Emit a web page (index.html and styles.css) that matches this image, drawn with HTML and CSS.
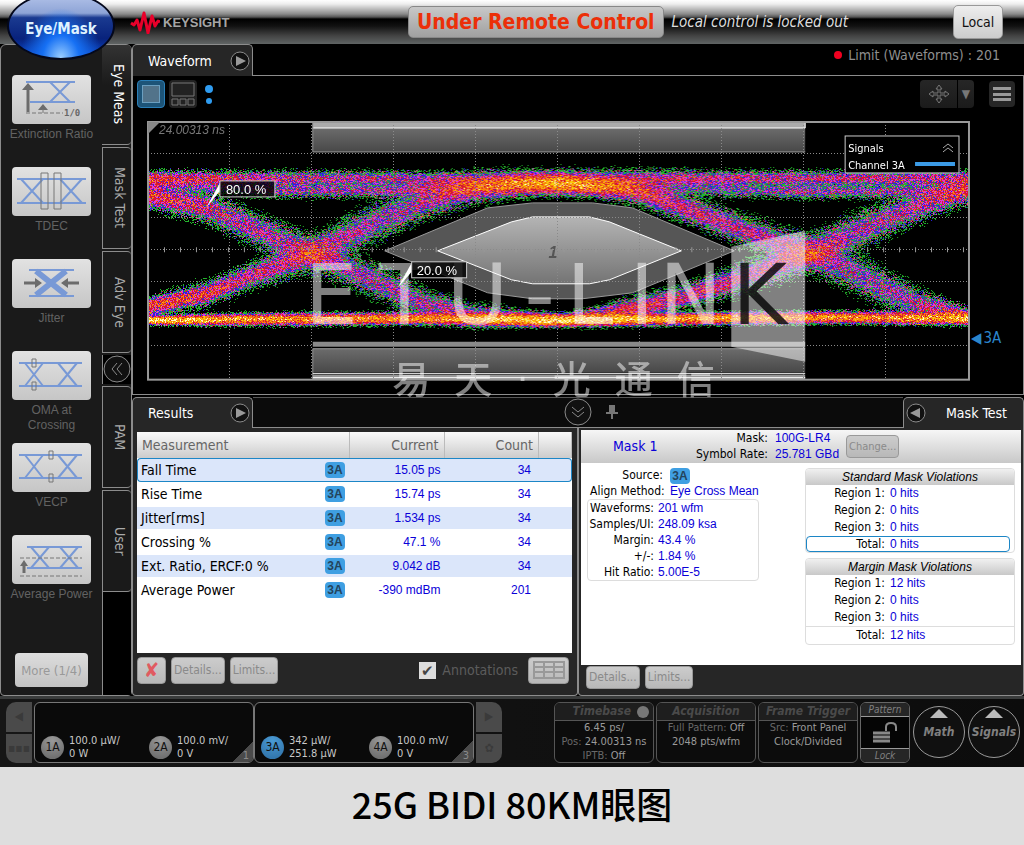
FILE: index.html
```html
<!DOCTYPE html>
<html lang="en">

<head>
  <meta charset="UTF-8">
  <meta name="viewport" content="width=device-width, initial-scale=1.0">
  <title>25G BIDI 80KM眼图</title>

  <link rel="stylesheet" href="styles.css">
</head>

<body>
  <div class="instrument">

    <header class="topbar">
      <button class="mode">Eye/Mask</button>
      <div class="brand">
        <svg width="30" height="24" viewBox="0 0 30 24">
          <path d="M1 13l3 2 3-5 3 10 4-17 4 20 4-17 3 10 3-5 2 1" fill="none" stroke="#e9002a" stroke-width="3" stroke-linejoin="round"/>
        </svg>
        <span>KEYSIGHT</span>
      </div>
      <p class="remote"><strong>Under Remote Control</strong><em>Local control is locked out</em></p>
      <button class="local">Local</button>
    </header>

    <main>
      <aside class="sidebar">
        <section class="measures">
          <div class="measure">
            <button aria-labelledby="m1">
              <svg viewBox="0 0 79 49">
                <path class="eye" d="M14 7h49M18 27h45M38 7l20 20M58 7l-20 20"/>
                <path class="arm" d="M16 37V13"/>
                <path class="tip" d="M16 8l6 7H10zM31 29l5 6H26z"/>
                <path class="dash" d="M14 38h37M31 34v4"/>
                <text x="52" y="41">1/0</text>
              </svg>
            </button>
            <span id="m1">Extinction Ratio</span>
          </div>
          <div class="measure">
            <button aria-labelledby="m2">
              <svg viewBox="0 0 79 49">
                <path class="eye" d="M5 12h69M5 36h69M9 12l22 24M31 12L9 36M48 12l22 24M70 12L48 36"/>
                <path class="gate" d="M29 6h7v36h-7zM42 6h7v36h-7z"/>
              </svg>
            </button>
            <span id="m2">TDEC</span>
          </div>
          <div class="measure">
            <button aria-labelledby="m3">
              <svg viewBox="0 0 79 49">
                <path class="eye" d="M17 11h45M17 37h45"/>
                <path class="eye thick" d="M24 12l30 24M54 12L24 36"/>
                <path class="arm" d="M12 24h12M67 24H55"/>
                <path class="tip" d="M30 24l-7 5V19zM49 24l7 5V19z"/>
              </svg>
            </button>
            <span id="m3">Jitter</span>
          </div>
          <div class="measure">
            <button aria-labelledby="m4">
              <svg viewBox="0 0 79 49">
                <path class="eye" d="M7 12h63M7 35h63M13 12l18 23M31 12L13 35M46 12l19 23M65 12L46 35"/>
                <path class="gate" d="M20 8h4v8h-4zM20 31h4v8h-4z"/>
              </svg>
            </button>
            <span id="m4">OMA at<br>Crossing</span>
          </div>
          <div class="measure">
            <button aria-labelledby="m5">
              <svg viewBox="0 0 79 49">
                <path class="eye" d="M7 12h63M7 35h63M13 12l18 23M31 12L13 35M46 12l19 23M65 12L46 35"/>
                <path class="gate" d="M37 8h4v8h-4zM37 31h4v8h-4z"/>
              </svg>
            </button>
            <span id="m5">VECP</span>
          </div>
          <div class="measure">
            <button aria-labelledby="m6">
              <svg viewBox="0 0 79 49">
                <path class="eye" d="M15 12h55M15 33h55M19 12l18 21M37 12L19 33M48 12l18 21M66 12L48 33"/>
                <path class="dash" d="M8 23h62M8 41h62"/>
                <path class="arm" d="M12 38V29"/>
                <path class="tip" d="M12 25l4 6H8z"/>
              </svg>
            </button>
            <span id="m6">Average Power</span>
          </div>
          <button class="more">More (1/4)</button>
        </section>

        <nav class="sidetabs">
          <button class="selected">Eye Meas</button>
          <button>Mask Test</button>
          <button>Adv Eye</button>
          <button class="fold" aria-label="Collapse">
            <svg width="28" height="28" viewBox="0 0 28 28">
              <circle class="ring" cx="14" cy="14" r="13"/>
              <path class="chevron" d="M14 8l-5 6 5 6M19 8l-5 6 5 6"/>
            </svg>
          </button>
          <button>PAM</button>
          <button>User</button>
          <span class="rest"></span>
        </nav>
      </aside>

      <div class="workspace">
        <div class="tabrow">
          <div class="tab">
            <span>Waveform</span>
            <svg width="20" height="20" viewBox="0 0 20 20"><circle class="ring" cx="10" cy="10" r="9"/><path d="M6 5l10 5-10 5z" fill="#999"/></svg>
          </div>
          <p class="limit"><i></i>Limit (Waveforms) : 201</p>
        </div>

        <section class="waveform">
          <div class="tools">
            <button class="view selected" aria-label="Single view"><i></i></button>
            <button class="view" aria-label="Tiled view">
              <svg width="28" height="28" viewBox="0 0 28 28"><path d="M3 3h22v13H3zM3 19h6v6H3zM11 19h6v6h-6zM19 19h6v6h-6z" fill="none" stroke="#777"/></svg>
            </button>
            <svg class="dots" width="12" height="24" viewBox="0 0 12 24"><circle cx="6" cy="7" r="4"/><circle cx="6" cy="19" r="3"/></svg>
            <div class="move">
              <button aria-label="Pan">
                <svg width="24" height="24" viewBox="0 0 24 24"><path d="M12 3l3 4h-2v4h5V9l4 3-4 3v-2h-5v4h2l-3 4-3-4h2v-4H6v2l-4-3 4-3v2h5V7H9z" fill="none" stroke="#777"/></svg>
              </button>
              <button aria-label="Pan options">▼</button>
            </div>
            <button class="menu" aria-label="Menu"><i></i><i></i><i></i></button>
          </div>

          <div class="plotrow">
            <div class="plot">
              <canvas width="824" height="260"></canvas>
              <svg class="overlay" viewBox="0 0 824 260">
                <defs>
                  <linearGradient id="shade" x2="0" y2="1"><stop offset="0" stop-color="#b4b4b4"/><stop offset="1" stop-color="#747474"/></linearGradient>
                  <linearGradient id="slab" x2="0" y2="1"><stop offset="0" stop-color="#6c6c6c"/><stop offset="1" stop-color="#484848"/></linearGradient>
                </defs>

                <!-- mask regions -->
                <path d="M166 1h493v6H166z" fill="#aaa"/>
                <path d="M166 7h493v24H166z" fill="url(#slab)"/>
                <path d="M166 31h493" stroke="#999"/>
                <path d="M166 7h493M659 1v6" stroke="#fff"/>
                <path d="M166 221h493v5H166z" fill="#8a8a8a"/>
                <path d="M166 228h493v24H166z" fill="url(#slab)"/>
                <path d="M166 228h493M166 1v30M166 228v31" stroke="#999"/>
                <path d="M166 254h493v5H166z" fill="#999"/>
                <path d="M166 253h493M166 257h493" stroke="#fff"/>
                <path d="M238 130l103-43 45-5h60l40 5 102 43-102 42-50 6h-50l-45-6z" fill="#565656" stroke="#999"/>
                <path d="M291 130l74-29 21-5h57l20 5 72 29-72 29-20 4h-57l-21-4z" fill="url(#shade)" stroke="#fff"/>
                <text x="402" y="137" class="region">1</text>

                <!-- graticule -->
                <g class="grid">
                  <path d="M83 1v258M165 1v258M247 1v258M329 1v258M411 1v258M493 1v258M575 1v258M657 1v258M739 1v258"/>
                  <path d="M1 33h822M1 97h822M1 161h822M1 225h822M1 129h822"/>
                </g>
                <path class="ticks" d="M1 129h822"/>
                <rect x="1" y="1" width="822" height="258" fill="none" stroke="#999" stroke-width="2"/>
                <path d="M1 1h12L1 13z" fill="#888"/>
                <text x="12" y="13" class="time">24.00313 ns</text>

                <!-- watermark -->
                <path d="M585 126l74-16v131l-74-15z" fill="#fff" opacity=".5"/>
                <text class="logo" y="203"><tspan x="158">E</tspan><tspan x="232">T</tspan><tspan x="300">U</tspan><tspan x="378">-</tspan><tspan x="420">L</tspan><tspan x="483">I</tspan><tspan x="513">N</tspan><tspan class="cut" x="586">K</tspan></text>

                <!-- level callouts -->
                <path d="M73 62l-14 25 14-17z" fill="#fff"/>
                <rect class="callout" x="73" y="60" width="55" height="16"/>
                <text class="level" x="79" y="73">80.0 %</text>
                <path d="M265 142l-14 25 14-16z" fill="#fff"/>
                <rect class="callout" x="265" y="141" width="55" height="16"/>
                <text class="level" x="270" y="154">20.0 %</text>

                <rect class="signals" x="699" y="15" width="114" height="37"/>
                <text class="legend" x="702" y="31">Signals</text>
                <text class="legend" x="702" y="48">Channel 3A</text>
                <path d="M797 27l5-4 5 4M797 31l5-4 5 4" fill="none" stroke="#aaa"/>
                <path d="M769 43h40" stroke="#3b9be6" stroke-width="4"/>
              </svg>
              <p class="watermark"><span>易</span> <span>天</span> <span class="dot">·</span> <span>光</span> <span>通</span> <span>信</span></p>
            </div>
            <p class="marker">◀<span>3A</span></p>
          </div>
        </section>

        <div class="tabrow lower">
          <div class="tab">
            <span>Results</span>
            <svg width="20" height="20" viewBox="0 0 20 20"><circle class="ring" cx="10" cy="10" r="9"/><path d="M6 5l10 5-10 5z" fill="#999"/></svg>
          </div>
          <div class="between">
            <button class="fold" aria-label="Hide panels">
              <svg width="28" height="28" viewBox="0 0 28 28"><circle class="ring" cx="14" cy="14" r="13"/><path class="chevron" d="M8 9l6 5 6-5M8 14l6 5 6-5"/></svg>
            </button>
            <svg width="14" height="16" viewBox="0 0 14 16"><path d="M4 1h6v7h3v2H8v5H6v-5H1V8h3z" fill="#777"/></svg>
          </div>
          <div class="tab right">
            <svg width="20" height="20" viewBox="0 0 20 20"><circle class="ring" cx="10" cy="10" r="9"/><path d="M14 5L4 10l10 5z" fill="#999"/></svg>
            <span>Mask Test</span>
          </div>
        </div>

        <div class="panels">
          <section class="results">
            <div class="sheet">
              <table>
                <thead>
                  <tr><th>Measurement</th><th></th><th>Current</th><th>Count</th><th></th></tr>
                </thead>
                <tbody>
                  <tr class="selected"><td>Fall Time</td><td><b class="chip">3A</b></td><td>15.05 ps</td><td>34</td><td></td></tr>
                  <tr><td>Rise Time</td><td><b class="chip">3A</b></td><td>15.74 ps</td><td>34</td><td></td></tr>
                  <tr><td>Jitter[rms]</td><td><b class="chip">3A</b></td><td>1.534 ps</td><td>34</td><td></td></tr>
                  <tr><td>Crossing %</td><td><b class="chip">3A</b></td><td>47.1 %</td><td>34</td><td></td></tr>
                  <tr><td>Ext. Ratio, ERCF:0 %</td><td><b class="chip">3A</b></td><td>9.042 dB</td><td>34</td><td></td></tr>
                  <tr><td>Average Power</td><td><b class="chip">3A</b></td><td>-390 mdBm</td><td>201</td><td></td></tr>
                </tbody>
              </table>
            </div>
            <div class="actions">
              <button class="flat clear" aria-label="Clear">✘</button>
              <button class="flat">Details...</button>
              <button class="flat">Limits...</button>
              <label class="annot"><input type="checkbox" checked>Annotations</label>
              <button class="flat cells" aria-label="Table layout">
                <svg width="32" height="18" viewBox="0 0 32 18"><path d="M1 1h30v16H1zM1 6h30M1 11h30M11 1v16M21 1v16" fill="none" stroke="#999" stroke-width="2"/></svg>
              </button>
            </div>
          </section>

          <section class="masktest">
            <div class="sheet">
              <div class="maskhead">
                <h2>Mask 1</h2>
                <dl>
                  <dt>Mask:</dt><dd>100G-LR4</dd>
                  <dt>Symbol Rate:</dt><dd>25.781 GBd</dd>
                </dl>
                <button class="flat change">Change...</button>
              </div>
              <div class="maskbody">
                <div class="setup">
                  <dl>
                    <dt>Source:</dt><dd><b class="chip">3A</b></dd>
                    <dt>Align Method:</dt><dd>Eye Cross Mean</dd>
                  </dl>
                  <dl class="boxed">
                    <dt>Waveforms:</dt><dd>201 wfm</dd>
                    <dt>Samples/UI:</dt><dd>248.09 ksa</dd>
                    <dt>Margin:</dt><dd>43.4 %</dd>
                    <dt>+/-:</dt><dd>1.84 %</dd>
                    <dt>Hit Ratio:</dt><dd>5.00E-5</dd>
                  </dl>
                </div>
                <div class="violations">
                  <section>
                    <h3>Standard Mask Violations</h3>
                    <dl>
                      <dt>Region 1:</dt><dd>0 hits</dd>
                      <dt>Region 2:</dt><dd>0 hits</dd>
                      <dt>Region 3:</dt><dd>0 hits</dd>
                    </dl>
                    <dl class="total selected"><dt>Total:</dt><dd>0 hits</dd></dl>
                  </section>
                  <section>
                    <h3>Margin Mask Violations</h3>
                    <dl>
                      <dt>Region 1:</dt><dd>12 hits</dd>
                      <dt>Region 2:</dt><dd>0 hits</dd>
                      <dt>Region 3:</dt><dd>0 hits</dd>
                    </dl>
                    <dl class="total"><dt>Total:</dt><dd>12 hits</dd></dl>
                  </section>
                </div>
              </div>
            </div>
            <div class="actions">
              <button class="flat">Details...</button>
              <button class="flat">Limits...</button>
            </div>
          </section>
        </div>
      </div>
    </main>

    <footer class="status">
      <div class="paddle left"><button aria-label="Previous">◀</button><button aria-label="Grid">▪▪▪</button></div>
      <div class="slot">
        <div class="channel"><b>1A</b><span>100.0 µW/<br>0 W</span></div>
        <div class="channel"><b>2A</b><span>100.0 mV/<br>0 V</span></div>
        <span class="corner">1</span>
      </div>
      <div class="slot">
        <div class="channel active"><b>3A</b><span>342 µW/<br>251.8 µW</span></div>
        <div class="channel"><b>4A</b><span>100.0 mV/<br>0 V</span></div>
        <span class="corner">3</span>
      </div>
      <div class="paddle"><button aria-label="Next">▶</button><button aria-label="Settings">✿</button></div>

      <div class="card first">
        <h4>Timebase <i></i></h4>
        <p><span>6.45 ps/</span><br>Pos: <span>24.00313 ns</span><br>IPTB: <span>Off</span></p>
      </div>
      <div class="card">
        <h4>Acquisition</h4>
        <p>Full Pattern: <span>Off</span><br><span>2048 pts/wfm</span></p>
      </div>
      <div class="card">
        <h4>Frame Trigger</h4>
        <p>Src: <span>Front Panel</span><br><span>Clock/Divided</span></p>
      </div>
      <button class="lock">
        <span>Pattern</span>
        <svg width="28" height="24" viewBox="0 0 28 24"><path d="M2 12h17M2 16h17M2 20h17" stroke="#888" stroke-width="3"/><path d="M15 10V6q0-4 5-4t5 4v4" fill="none" stroke="#888" stroke-width="2"/></svg>
        <span>Lock</span>
      </button>
      <button class="round"><i></i>Math</button>
      <button class="round"><i></i>Signals</button>
    </footer>
  </div>

  <p class="caption">25G BIDI 80KM眼图</p>

  <script src="trace.js"></script>
</body>

</html>
```
FILE: styles.css
```css
:root {
  --ui: "DejaVu Sans Condensed", "DejaVu Sans", sans-serif;
  --num: "Liberation Sans", Arial, sans-serif;
  --line: #8c8c8c;
  --panel: #262626;
  --value: #0a00d8;
}

* {
  box-sizing: border-box;
}

body {
  margin: 0;
  background: #dedede;
  font-family: var(--ui);
  font-size: 14px;
}

p,
dl,
dd,
h2,
h3,
h4 {
  margin: 0;
}

button {
  padding: 0;
  border: 0;
  background: none;
  color: inherit;
  font: inherit;
}

svg {
  display: block;
}

.instrument {
  background: #000;
}

.ring {
  fill: #111;
  stroke: #8a8a8a;
}

.chevron {
  fill: none;
  stroke: #8a8a8a;
}

/* top bar */
.topbar {
  position: relative;
  display: flex;
  align-items: center;
  height: 44px;
  padding: 0 21px 0 130px;
  background: linear-gradient(#fff 0, #eee 4px, #8a8a8a 14px, #555 17px, #000 19px, #111 26px, #444 36px, #606464 44px);
}

.mode {
  position: absolute;
  z-index: 2;
  left: 7px;
  top: -8px;
  width: 108px;
  height: 68px;
  padding-top: 6px;
  border: 2px solid #04081c;
  border-radius: 50%;
  background:
    radial-gradient(ellipse at 50% 100%, #9ccfff 0, #1670f4 25%, transparent 55%),
    linear-gradient(#b4c4ea 0, #8ea4d6 30%, #1a3a90 37%, #08227c 70%, #0c50d8 100%);
  color: #dff2ff;
  font-size: 15px;
  font-weight: bold;
}

.brand {
  display: flex;
  align-items: center;
  gap: 3px;
  color: #a5a5a5;
  font: bold 13px var(--num);
}

.remote {
  display: flex;
  align-items: center;
  gap: 8px;
  margin-left: auto;
  padding-right: 105px;
  color: #ddd;
  font-size: 15px;
}

.remote strong {
  padding: 0 8px;
  border: 1px solid #888;
  border-radius: 5px;
  background: linear-gradient(#c8c8c8, #a0a0a0);
  color: #ec2f08;
  font-size: 21px;
  line-height: 30px;
}

.local {
  width: 50px;
  height: 34px;
  border: 1px solid #999;
  border-radius: 5px;
  background: linear-gradient(#eee, #ccc);
  color: #111;
}

main {
  display: flex;
}

/* sidebar */
.sidebar {
  display: flex;
  flex: none;
  width: 132px;
  border: 1px solid var(--line);
  border-radius: 6px 6px 4px 4px;
  background: #1a1a1a;
}

.measures {
  display: flex;
  flex-direction: column;
  align-items: center;
  width: 101px;
  padding: 30px 0 8px;
}

.measure {
  display: flex;
  flex-direction: column;
  align-items: center;
  gap: 3px;
  height: 92px;
  color: #626262;
  font: 12px/15px var(--num);
  text-align: center;
  white-space: nowrap;
}

.measure button {
  width: 79px;
  height: 49px;
  border-radius: 4px;
  background: linear-gradient(#e2e2e2, #c6c6c6);
}

.measure text {
  fill: #666;
  font: bold 9px "DejaVu Sans Mono", monospace;
}

.eye {
  fill: none;
  stroke: #7899d6;
  stroke-width: 2;
}

.eye.thick {
  stroke-width: 6;
}

.arm {
  stroke: #6c6c6c;
  stroke-width: 3;
}

.tip {
  fill: #6c6c6c;
}

.gate {
  fill: none;
  stroke: #777;
}

.dash {
  fill: none;
  stroke: #777;
  stroke-dasharray: 4 2;
}

.more {
  width: 73px;
  height: 34px;
  margin-top: 26px;
  border-radius: 4px;
  background: linear-gradient(#ddd, #c2c2c2);
  color: #999;
  font-size: 13px;
}

.sidetabs {
  display: flex;
  flex: 1;
  flex-direction: column;
  gap: 2px;
}

.sidetabs button {
  height: 102px;
  padding-left: 5px;
  border: 1px solid var(--line);
  border-radius: 0 4px 4px 0;
  border-right: 0;
  color: #aaa;
  writing-mode: vertical-rl;
}

.sidetabs .selected {
  height: 100px;
  border-width: 0 0 1px;
  color: #fff;
  background: linear-gradient(#333, #1a1a1a 40px);
}

.sidetabs .fold {
  height: 29px;
  padding: 0;
  border-width: 0 0 0 1px;
  border-radius: 0;
  background: #000;
}

.sidetabs .rest {
  flex: 1;
  margin-top: -2px;
  border-left: 1px solid var(--line);
  background: #000;
}

/* workspace */
.workspace {
  flex: 1;
  min-width: 0;
}

.tabrow {
  display: flex;
  height: 32px;
}

.tab {
  display: flex;
  align-items: center;
  justify-content: space-between;
  width: 121px;
  padding: 0 2px 0 15px;
  border: 1px solid var(--line);
  border-bottom: 0;
  border-radius: 5px 5px 0 0;
  background: var(--panel);
  color: #fff;
}

.tab.right {
  padding: 0 16px 0 2px;
}

.limit {
  display: flex;
  flex: 1;
  align-items: center;
  justify-content: flex-end;
  gap: 6px;
  padding: 0 24px 9px 0;
  border-bottom: 1px solid var(--line);
  color: #8f8f8f;
}

.limit i {
  width: 8px;
  height: 8px;
  border-radius: 50%;
  background: #f00020;
}

.waveform {
  padding: 4px 3px 13px 4px;
  border: 1px solid var(--line);
  border-top: 0;
}

.tools {
  display: flex;
  align-items: center;
  gap: 4px;
  height: 28px;
}

.view {
  width: 28px;
  height: 28px;
  padding: 4px;
  border-radius: 4px;
  background: #222;
}

.view svg {
  margin: -4px;
}

.view.selected {
  border: 1px solid #2a7fb8;
  background: #1d5478;
}

.view i {
  display: block;
  height: 18px;
  border: 1px solid #6b9fc0;
  background: #52738a;
}

.dots {
  margin-left: 2px;
  fill: #2f9cf0;
}

.move {
  display: flex;
  gap: 1px;
  margin-left: auto;
}

.move button {
  display: flex;
  align-items: center;
  justify-content: center;
  width: 37px;
  height: 28px;
  border-radius: 4px 0 0 4px;
  background: linear-gradient(#262626, #1b1b1b);
  color: #777;
  font-size: 12px;
}

.move button + button {
  width: 16px;
  border-radius: 0 4px 4px 0;
}

.menu {
  display: flex;
  flex-direction: column;
  justify-content: space-between;
  width: 26px;
  height: 26px;
  margin: 0 5px 0 11px;
  padding: 6px 4px;
  border-radius: 4px;
  background: #262626;
}

.menu i {
  height: 3px;
  background: #999;
}

.plotrow {
  display: flex;
  padding: 13px 0 0 10px;
}

.plot {
  position: relative;
  flex: 1;
}

.plot canvas {
  display: block;
  width: 100%;
}

.overlay {
  position: absolute;
  inset: 0;
  width: 100%;
}

.grid path {
  stroke: #8a8a8a;
  stroke-dasharray: 1 2;
  shape-rendering: crispEdges;
}

.ticks {
  stroke: #999;
  stroke-width: 5;
  stroke-dasharray: 1 15;
}

.region {
  fill: #555;
  font: italic bold 16px var(--num);
}

.time {
  fill: #777;
  font: italic 12px var(--num);
}

.logo {
  fill: #fff;
  fill-opacity: .5;
  font: 84px "DejaVu Sans", sans-serif;
}

.logo .cut {
  fill: #000;
  fill-opacity: .8;
}

.callout,
.signals {
  fill: #000;
  stroke: #ccc;
}

.callout {
  fill-opacity: .8;
}

.level {
  fill: #fff;
  font: 13px var(--num);
}

.legend {
  fill: #fff;
  font: 11px var(--ui);
}

.watermark {
  position: absolute;
  z-index: 1;
  top: 232px;
  left: 0;
  display: flex;
  justify-content: center;
  gap: 24px;
  width: 100%;
  padding-right: 10px;
  color: rgb(255 255 255 / .5);
  font: 500 38px/48px "Noto Sans CJK SC", sans-serif;
}

.watermark .dot {
  font-family: "Liberation Sans", sans-serif;
}

.marker {
  display: flex;
  align-items: center;
  gap: 2px;
  width: 50px;
  height: 20px;
  margin-top: 207px;
  padding-left: 1px;
  color: #2a86cc;
  font-size: 15px;
}

/* lower panels */
.lower {
  height: 31px;
  margin-top: 2px;
}

.between {
  display: grid;
  grid-template-columns: 1fr auto 1fr;
  flex: 1;
  gap: 13px;
  align-items: center;
  padding-bottom: 4px;
  border-top: 1px solid #555;
  border-bottom: 1px solid var(--line);
  background: #0b0b0b;
}

.between .fold {
  grid-column: 2;
}

.panels {
  display: grid;
  grid-template-columns: 1fr 1fr;
}

.results,
.masktest {
  display: flex;
  flex-direction: column;
  min-width: 0;
  border: 1px solid var(--line);
  border-top: 0;
  border-radius: 0 0 4px 4px;
  background: var(--panel);
}

.results {
  padding: 4px 5px 11px 4px;
}

.masktest {
  padding: 2px 2px 6px 2px;
}

.sheet {
  flex: 1;
  background: #fff;
}

.results .sheet {
  min-height: 221px;
}

table {
  width: 100%;
  border-collapse: separate;
  border-spacing: 0;
  table-layout: fixed;
}

th {
  height: 26px;
  padding: 0 5px;
  border-right: 1px solid #bbb;
  background: linear-gradient(#fafafa, #ccc);
  color: #666;
  font-weight: normal;
  text-align: right;
}

th:nth-child(1) {
  width: 188px;
  border-right: 0;
  text-align: left;
}

th:nth-child(2) {
  width: 25px;
}

th:nth-child(5) {
  width: 33px;
}

td {
  height: 24px;
  padding: 0 8px 0 4px;
  border: solid #fff;
  border-width: 1px 0;
  color: var(--value);
  font: 12px var(--num);
  text-align: right;
}

td:nth-child(1) {
  color: #000;
  font: 14px var(--ui);
  text-align: left;
  white-space: nowrap;
}

td:nth-child(2) {
  padding: 0;
  text-align: left;
}

td:nth-child(3) {
  padding-right: 4px;
}

tbody tr:nth-child(odd) td {
  background: #dbe6fa;
}

tbody .selected td {
  border-color: #1c86c6;
}

tbody .selected td:first-child {
  border-left-width: 1px;
  border-radius: 4px 0 0 4px;
  padding-left: 3px;
}

tbody .selected td:last-child {
  border-right-width: 1px;
  border-radius: 0 4px 4px 0;
}

.chip {
  display: inline-block;
  width: 20px;
  border-radius: 4px;
  background: #3f9fe2;
  color: #24445c;
  font: bold 12px/16px var(--num);
  text-align: center;
}

.actions {
  display: flex;
  align-items: center;
  gap: 5px;
  padding-top: 4px;
}

.masktest .actions {
  gap: 5px;
  padding: 1px 0 0 5px;
}

.flat {
  height: 27px;
  padding: 0 2px;
  border: 1px solid #999;
  border-radius: 4px;
  background: linear-gradient(#ccc, #b8b8b8);
  color: #8a8a8a;
  font-size: 12px;
}

.masktest .actions .flat {
  height: 23px;
}

.clear {
  width: 29px;
  color: #e05a60;
  font-size: 20px;
  line-height: 20px;
}

.annot {
  display: flex;
  align-items: center;
  gap: 6px;
  margin-left: auto;
  padding-right: 5px;
  color: #5c5c5c;
}

.annot input {
  appearance: none;
  width: 17px;
  height: 17px;
  margin: 0;
  background: #ddd;
  color: #444;
  font-size: 15px;
  line-height: 17px;
  text-align: center;
}

.annot input:checked::before {
  content: "✔";
}

.cells {
  display: flex;
  align-items: center;
  justify-content: center;
  width: 41px;
  margin-right: 3px;
}

.maskhead {
  display: flex;
  align-items: center;
  height: 33px;
  background: linear-gradient(#f6f6f6, #c8c8c8);
}

.masktest h2 {
  width: 110px;
  padding-left: 32px;
  color: var(--value);
  font-size: 14px;
  font-weight: normal;
}

.masktest dl {
  display: grid;
  grid-template-columns: 73px 1fr;
  gap: 0 7px;
  font-size: 12px;
}

.masktest dt {
  text-align: right;
  white-space: nowrap;
}

.masktest dd {
  color: var(--value);
  font-family: var(--num);
  white-space: nowrap;
}

.maskhead dl {
  grid-template-columns: 77px auto;
  line-height: 16px;
}

.change {
  height: 23px;
  margin-left: 7px;
  font-size: 11px;
}

.maskbody {
  display: flex;
  justify-content: space-between;
  padding: 5px 6px 0;
}

.setup dl {
  line-height: 15px;
}

.setup dl:first-child {
  padding-left: 3px;
}

.masktest .boxed {
  grid-template-columns: 66px 100px;
  gap: 0 4px;
  border: 1px solid #ddd;
  border-radius: 4px;
  line-height: 16px;
}

.violations {
  display: flex;
  flex-direction: column;
  gap: 5px;
  width: 210px;
}

.violations section {
  border: 1px solid #ddd;
  border-radius: 4px;
}

.violations h3 {
  border-radius: 4px 4px 0 0;
  background: linear-gradient(#f0f0f0, #c8c8c8);
  font: italic 12px/16px var(--num);
  text-align: center;
}

.masktest .violations dl {
  grid-template-columns: 79px 1fr;
  gap: 0 5px;
  line-height: 17px;
}

.violations .total {
  border-top: 1px solid #ddd;
}

.masktest .violations .selected {
  grid-template-columns: 78px 1fr;
  width: 204px;
  border: 1px solid #1c86c6;
  border-radius: 4px;
  line-height: 14px;
}

/* channel and acquisition strip */
.status {
  display: flex;
  height: 71px;
  padding: 3px 4px 4px 6px;
  border-top: 3px solid #3a3c3c;
  background: linear-gradient(90deg, #161616, #0c0c0c);
  color: #c8c8c8;
  font-size: 11px;
  line-height: 13px;
}

.paddle {
  display: flex;
  flex-direction: column;
  gap: 2px;
  width: 26px;
  margin: 0 2px;
}

.paddle.left {
  margin-left: 0;
}

.paddle button {
  flex: 1;
  border-radius: 0 10px 0 0;
  background: #4a4a4a;
  color: #3a3a3a;
  font-size: 12px;
}

.paddle button + button {
  border-radius: 0 0 10px 0;
}

.paddle.left button {
  border-radius: 10px 0 0 0;
}

.paddle.left button + button {
  border-radius: 0 0 0 10px;
}

.slot {
  position: relative;
  display: flex;
  align-items: flex-end;
  width: 220px;
  padding: 0 0 2px 6px;
  border: 1px solid #777;
  border-radius: 6px;
  background: #0a0a0a;
}

.channel {
  display: flex;
  flex: none;
  gap: 5px;
  align-items: center;
  width: 108px;
}

.channel b {
  width: 23px;
  border-radius: 50%;
  background: radial-gradient(circle at 50% 20%, #999, #666);
  color: #111;
  font-size: 12px;
  font-weight: normal;
  line-height: 23px;
  text-align: center;
}

.channel.active b {
  background: radial-gradient(circle at 50% 20%, #4a9ad4, #2d6ea4);
}

.corner {
  position: absolute;
  right: 0;
  bottom: 0;
  width: 21px;
  height: 21px;
  padding: 8px 4px 0 0;
  border-radius: 0 0 5px 0;
  background: linear-gradient(135deg, transparent 50%, #4a4a4a 50%);
  color: #8a8a8a;
  text-align: right;
}

.card {
  width: 100px;
  margin-right: 2px;
  border: 1px solid #555;
  border-radius: 6px;
  background: #0c0c0c;
  color: #686868;
  text-align: center;
  white-space: nowrap;
  overflow: hidden;
}

.card.first {
  margin-left: auto;
}

.card h4 {
  display: flex;
  align-items: center;
  justify-content: center;
  gap: 6px;
  height: 18px;
  border-bottom: 1px solid #555;
  background: #1e1e1e;
  color: #4a4a4a;
  font-size: 12px;
  font-style: italic;
}

.card.first h4 {
  justify-content: flex-end;
  padding-right: 4px;
}

.card h4 i {
  width: 12px;
  height: 12px;
  border-radius: 50%;
  background: #777;
}

.card p {
  line-height: 14px;
}

.card span {
  color: #9a9a9a;
}

.lock {
  display: flex;
  flex-direction: column;
  align-items: center;
  justify-content: space-between;
  width: 50px;
  border: 1px solid #666;
  border-radius: 6px;
  background: #050505;
  color: #808080;
  font-size: 10px;
  font-style: italic;
  overflow: hidden;
}

.lock span {
  width: 100%;
  border-bottom: 1px solid #999;
  background: #262626;
}

.lock span:last-child {
  border-top: 1px solid #999;
  border-bottom: 0;
}

.round {
  display: flex;
  flex-direction: column;
  align-items: center;
  gap: 8px;
  width: 52px;
  height: 52px;
  margin: 4px 0 0 3px;
  padding-top: 2px;
  border: 1px solid #999;
  border-radius: 50%;
  background: #101010;
  color: #808080;
  font-size: 12px;
  font-style: italic;
  font-weight: bold;
}

.round i {
  border: solid transparent;
  border-width: 0 9px 9px;
  border-bottom-color: #bbb;
}

.caption {
  padding: 10px 0 15px;
  color: #000;
  font: 500 36px/52px "Noto Sans CJK SC", sans-serif;
  text-align: center;
}
```
FILE: trace.js
```js
const canvas = document.querySelector('.plot canvas');
const ctx = canvas.getContext('2d');
const W = canvas.width;
const H = canvas.height;

// hit-count colours, rarest first
const PALETTE = [
  [0.08, [0, 0, 0]],
  [0.22, [36, 180, 44]],
  [0.34, [44, 34, 225]],
  [0.52, [222, 60, 210]],
  [1.0, [214, 22, 50]],
  [1.9, [248, 130, 10]],
  [3.1, [248, 208, 10]],
  [99, [255, 250, 200]]
];

// each path: points of [x, y, spread, weight]
const PATHS = [
  [[0, 57, 4, .7], [100, 57, 4, .5], [250, 57, 4, .45], [330, 60, 5, .5], [412, 61, 6, .8], [500, 58, 5, .55], [600, 57, 4, .5], [824, 57, 4, .5]],
  [[0, 62, 4, .2], [130, 69, 4, .4], [280, 69, 4, .4], [350, 66, 5, .3], [412, 64, 5, .4], [520, 68, 4, .2], [660, 70, 4, .4], [750, 70, 4, .35], [824, 68, 4, .2]],
  [[0, 74, 6, .8], [60, 86, 8, .5], [110, 109, 9, .42], [166, 132, 9, .42], [226, 159, 9, .38], [276, 182, 8, .4], [326, 194, 6, .45], [412, 198, 3, .6], [500, 198, 3, .3]],
  [[0, 186, 5, .9], [60, 172, 6, .7], [110, 152, 7, .55], [166, 132, 9, .52], [226, 102, 10, .38], [276, 81, 9, .42], [326, 67, 8, .5], [376, 62, 6, .7], [412, 61, 5, .8]],
  [[412, 61, 5, .8], [486, 70, 6, .7], [536, 86, 7, .58], [603, 111, 8, .48], [663, 132, 9, .42], [703, 149, 10, .38], [736, 166, 10, .38], [770, 182, 8, .42], [824, 195, 4, .6]],
  [[330, 198, 3, .3], [412, 199, 3, .6], [436, 196, 4, .6], [486, 187, 6, .7], [536, 176, 6, .6], [603, 154, 8, .5], [663, 132, 9, .55], [703, 114, 10, .42], [753, 92, 9, .42], [786, 79, 8, .5], [824, 68, 7, .65]],
  [[0, 199, 2, 3], [90, 198, 3, 1.6], [280, 197, 3, 1.5], [412, 199, 3, 1.9], [560, 197, 3, 1.8], [700, 196, 3, 1.5], [824, 197, 3, 1.8]]
];

let seed = 20257;
function rand() {
  seed = (seed * 1664525 + 1013904223) >>> 0;
  return seed / 4294967296;
}

function at(path, x) {
  if (x < path[0][0] || x > path[path.length - 1][0]) return null;
  let i = 0;
  while (i < path.length - 2 && x > path[i + 1][0]) i++;
  const [a, b] = [path[i], path[i + 1]];
  const t = (x - a[0]) / (b[0] - a[0]);
  return [1, 2, 3].map(k => a[k] + (b[k] - a[k]) * t);
}

const image = ctx.createImageData(W, H);
for (let x = 0; x < W; x++) {
  const cuts = PATHS.map(p => at(p, x)).filter(Boolean);
  for (let y = 0; y < H; y++) {
    let hits = 0;
    for (const [cy, spread, weight] of cuts) {
      const d = (y - cy) / spread;
      hits += weight * Math.exp(-d * d / 2);
    }
    // sparse pixels scatter more than dense ones
    const scatter = hits < 0.2 ? 2 : 1;
    hits *= Math.exp((rand() + rand() + rand() - 1.5) * scatter);
    const color = PALETTE.find(([limit]) => hits < limit)[1];
    image.data.set([...color, 255], (y * W + x) * 4);
  }
}
ctx.putImageData(image, 0, 0);
```
